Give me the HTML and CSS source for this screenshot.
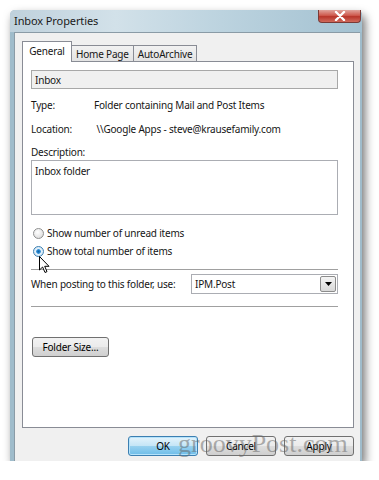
FILE: index.html
```html
<!DOCTYPE html>
<html>
  <head>
    <title>Inbox Properties</title>
    <link rel="stylesheet" href="styles.css">
  </head>
  <body>
    <div class="window">
      <div class="titlebar">
        <span class="title">Inbox Properties</span>
        <span class="closeBtn">
          <svg width="14" height="10" viewBox="0 0 14 10">
            <path d="M3 1 L11 9 M11 1 L3 9" stroke="#fff" stroke-width="2.4" stroke-linecap="round"/>
          </svg>
        </span>
      </div>
      <div class="client">
        <div class="tabs">
          <span class="tab active">General</span>
          <span class="tab">Home Page</span>
          <span class="tab">AutoArchive</span>
        </div>
        <div class="panel">
          <div class="nameField">Inbox</div>

          <div class="infoList">
            <div class="infoRow">
              <span class="infoLabel">Type:</span>
              <span>Folder containing Mail and Post Items</span>
            </div>
            <div class="infoRow">
              <span class="infoLabel">Location:</span>
              <span>&nbsp;\\Google Apps - steve@krausefamily.com</span>
            </div>
          </div>

          <div class="descLabel">Description:</div>
          <div class="descBox">Inbox folder</div>

          <div class="radioGroup">
            <div class="radioRow">
              <span class="radio"></span>
              <span>Show number of unread items</span>
            </div>
            <div class="radioRow">
              <span class="radio checked"></span>
              <span>Show total number of items</span>
            </div>
          </div>

          <div class="separator"></div>

          <div class="postRow">
            <span class="postLabel">When posting to this folder, use:</span>
            <div class="select">
              <span class="selectValue">IPM.Post</span>
              <span class="selectArrow">
                <svg width="7" height="4" viewBox="0 0 7 4"><path d="M0 0 H7 L3.5 4 Z" fill="#000"/></svg>
              </span>
            </div>
          </div>

          <div class="separator second"></div>

          <div class="folderSizeRow">
            <span class="button">Folder Size...</span>
          </div>
        </div>

        <div class="dialogButtons">
          <span class="button default">OK</span>
          <span class="button">Cancel</span>
          <span class="button">Apply</span>
        </div>
      </div>

      <!-- mouse pointer over the second radio -->
      <svg class="cursor" width="12" height="18" viewBox="0 0 12 18">
        <path d="M0.5 0.5 L0.5 14 L3.6 11 L6 16.5 L8 15.6 L5.7 10.3 L10 10.3 Z" fill="#fff" stroke="#000" stroke-width="1" stroke-linejoin="round"/>
      </svg>

      <div class="watermark">groovyPost.com</div>
    </div>
  </body>
</html>
```

FILE: styles.css
```css
* {
  box-sizing: border-box;
}

body {
  margin: 0;
  background: #fff;
  font-family: "Noto Sans", sans-serif;
  font-size: 10px;
  letter-spacing: -0.2px;
  color: #161616;
}

/* The dialog window */
.window {
  position: relative;
  width: 352px;
  height: 451px;
  margin: 10px 0 0 10px;
  display: flex;
  flex-direction: column;
  background: #9fbccb;
  border-radius: 5px 5px 0 0;
  box-shadow: 3px 5px 10px rgba(0, 0, 0, 0.55);
}

/* Title bar (Aero glass look) */
.titlebar {
  height: 22px;
  display: flex;
  align-items: flex-start;
  justify-content: space-between;
  border-radius: 5px 5px 0 0;
  background: linear-gradient(90deg, #bfd1dc 0%, #d2e1e9 30%, #bcd3df 60%, #a3c1d1 100%);
}

.title {
  padding: 3px 0 0 4px;
  font-size: 11px;
  letter-spacing: -0.1px;
  color: #1a1a1a;
}

.closeBtn {
  width: 43px;
  height: 13px;
  margin-right: 1px;
  display: flex;
  justify-content: center;
  align-items: center;
  border: 1px solid #7a3a36;
  border-top: none;
  border-radius: 0 0 4px 4px;
  background: linear-gradient(#e0a39c 0%, #cf5a4e 45%, #b8352a 55%, #d06a5c 100%);
}

/* Client area */
.client {
  flex: 1;
  display: flex;
  flex-direction: column;
  margin: 0 2px 0 4px;
  padding: 8px 6px 0 7px;
  background: #f0f0f0;
  border-left: 1px solid #8a9ba6;
  border-top: 1px solid #8a9ba6;
}

.tabs {
  display: flex;
  align-items: flex-end;
  height: 20px;
}

.tab {
  height: 16px;
  padding: 0 4px;
  display: flex;
  align-items: center;
  white-space: nowrap;
  border: 1px solid #898c95;
  border-bottom: none;
  border-left: none;
  background: linear-gradient(#f2f2f2, #e3e3e3);
}

.tab.active {
  height: 21px;
  width: 50px;
  justify-content: center;
  margin-bottom: -1px;
  border-left: 1px solid #898c95;
  background: #fff;
  position: relative;
  z-index: 1;
  padding-bottom: 3px;
}

.panel {
  height: 367px;
  display: flex;
  flex-direction: column;
  padding: 8px 15px 0 8px;
  border: 1px solid #898c95;
  background: #fff;
}

.nameField {
  height: 19px;
  padding: 0 3px;
  display: flex;
  align-items: center;
  border: 1px solid #a8a8a8;
  background: #f0f0f0;
}

.infoList {
  margin-top: 4px;
}

.infoRow {
  height: 24px;
  display: flex;
  align-items: center;
  white-space: nowrap;
}

.infoLabel {
  width: 63px;
}

.descLabel {
  height: 16px;
  margin-top: 3px;
  display: flex;
  align-items: center;
}

.descBox {
  height: 55px;
  padding: 3px 3px;
  border: 1px solid #abadb3;
}

.radioGroup {
  margin-top: 9px;
}

.radioRow {
  height: 18px;
  display: flex;
  align-items: center;
  gap: 3px;
  padding-left: 2px;
}

.radio {
  width: 11px;
  height: 11px;
  border-radius: 50%;
  border: 1px solid #8e8f8f;
  background: radial-gradient(circle at 40% 35%, #fff 0%, #e6e6e6 60%, #cfcfcf 100%);
}

.radio.checked {
  border-color: #3c7fb1;
  background: radial-gradient(circle, #0f63a5 0%, #2b8cd6 30%, #e4f1fa 42%, #c6dff2 100%);
}

.separator {
  height: 1px;
  margin-top: 9px;
  background: #a0a0a0;
  box-shadow: 0 1px 0 #fff;
}

.separator.second {
  margin-top: 12px;
}

.postRow {
  margin-top: 4px;
  display: flex;
  align-items: center;
  justify-content: space-between;
  white-space: nowrap;
}

.select {
  width: 147px;
  height: 20px;
  display: flex;
  align-items: center;
  justify-content: space-between;
  padding: 0 1px 0 3px;
  border: 1px solid #abadb3;
}

.selectArrow {
  width: 16px;
  height: 16px;
  display: flex;
  justify-content: center;
  align-items: center;
  border: 1px solid #8c8c8c;
  border-radius: 2px;
  background: linear-gradient(#f4f4f4, #d8d8d8);
}

.folderSizeRow {
  margin-top: 30px;
  display: flex;
}

/* Windows 7 style push button */
.button {
  height: 20px;
  display: inline-flex;
  align-items: center;
  justify-content: center;
  padding: 0 4px;
  white-space: nowrap;
  border: 1px solid #707070;
  border-radius: 3px;
  background: linear-gradient(#f2f2f2 0%, #ebebeb 50%, #dddddd 51%, #cfcfcf 100%);
  color: #000;
}

.folderSizeRow .button {
  width: 77px;
  margin-left: 1px;
}

.dialogButtons {
  margin-top: 8px;
  display: flex;
  justify-content: flex-end;
  gap: 8px;
}

.dialogButtons .button {
  width: 70px;
}

.button.default {
  border-color: #3c7fb1;
  background: linear-gradient(#e5f4fc 0%, #c4e5f6 50%, #98d1ef 51%, #6dbde9 100%);
  box-shadow: inset 0 0 0 1px #b5e3fb;
}

.cursor {
  position: absolute;
  left: 29px;
  top: 246px;
}

.watermark {
  position: absolute;
  left: 168px;
  top: 419px;
  font-family: "Liberation Serif", serif;
  font-size: 26px;
  letter-spacing: 0;
  color: rgba(100, 100, 100, 0.5);
  pointer-events: none;
}
```
